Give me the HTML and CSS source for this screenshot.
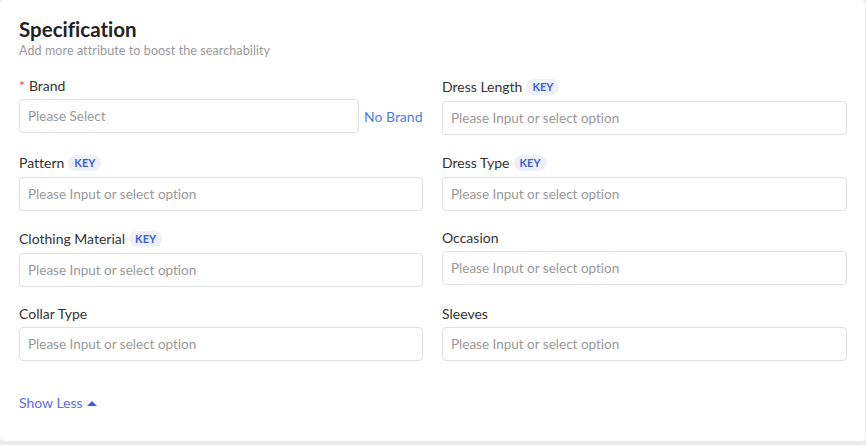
FILE: index.html
```html
<!DOCTYPE html>
<html>
<head>
<meta charset="utf-8">
<link rel="stylesheet" href="styles.css">
</head>
<body>
<div class="card">
  <div class="title">Specification</div>
  <div class="subtitle">Add more attribute to boost the searchability</div>
  <div class="grid">
    <div class="field">
      <div class="label"><span class="req">*</span> Brand</div>
      <div class="brand-row">
        <div class="input">Please Select</div>
        <a class="no-brand">No Brand</a>
      </div>
    </div>
    <div class="field">
      <div class="label">Dress Length <span class="key">KEY</span></div>
      <div class="input">Please Input or select option</div>
    </div>
    <div class="field">
      <div class="label">Pattern <span class="key">KEY</span></div>
      <div class="input">Please Input or select option</div>
    </div>
    <div class="field">
      <div class="label">Dress Type <span class="key">KEY</span></div>
      <div class="input">Please Input or select option</div>
    </div>
    <div class="field">
      <div class="label">Clothing Material <span class="key">KEY</span></div>
      <div class="input">Please Input or select option</div>
    </div>
    <div class="field">
      <div class="label">Occasion</div>
      <div class="input">Please Input or select option</div>
    </div>
    <div class="field">
      <div class="label">Collar Type</div>
      <div class="input">Please Input or select option</div>
    </div>
    <div class="field">
      <div class="label">Sleeves</div>
      <div class="input">Please Input or select option</div>
    </div>
  </div>
  <div class="show-less">Show Less <span class="caret"></span></div>
</div>
</body>
</html>
```
FILE: styles.css
```css
html, body {
  margin: 0;
  padding: 0;
  background: #ebebeb;
}
body {
  width: 866px;
  height: 445px;
  font-family: Lato, "Liberation Sans", sans-serif;
  color: #333;
  font-variant-ligatures: none;
}
.card {
  box-sizing: border-box;
  width: 865px;
  height: 441px;
  background: #fff;
  border-radius: 4px;
  padding: 15px 19px 0 19px;
}
.title {
  font-size: 20.5px;
  line-height: 28px;
  font-weight: 700;
  color: #222;
}
.subtitle {
  font-size: 12.5px;
  line-height: 15px;
  color: #999;
  letter-spacing: 0.1px;
  margin-bottom: 18px;
}
.grid {
  display: grid;
  grid-template-columns: 404px 405px;
  column-gap: 19px;
  row-gap: 17px;
  align-items: start;
}
.field {
  display: flex;
  flex-direction: column;
}
.label {
  font-size: 14px;
  line-height: 20px;
  min-height: 20px;
  margin-bottom: 3px;
  display: flex;
  align-items: center;
  gap: 4px;
  color: #333;
}
.req {
  color: #ee4d2d;
}
.key {
  display: inline-block;
  background: #eef0fa;
  color: #3b5fe0;
  font-size: 11px;
  font-weight: 700;
  line-height: 16px;
  height: 16px;
  padding: 0 6px;
  border-radius: 8px;
  margin: 3px 0;
}
.input {
  box-sizing: border-box;
  height: 34px;
  border: 1px solid #e0e0e0;
  border-radius: 4px;
  padding: 0 8px;
  font-size: 13.5px;
  line-height: 32px;
  color: #999;
}
.brand-row {
  display: flex;
  align-items: center;
  gap: 5px;
}
.brand-row .input {
  width: 340px;
}
.no-brand {
  color: #4c80e0;
  font-size: 14px;
}
.show-less {
  margin-top: 32px;
  font-size: 14px;
  line-height: 20px;
  color: #5a6ef0;
  display: flex;
  align-items: center;
  gap: 4px;
}
.caret {
  width: 0;
  height: 0;
  border-left: 5px solid transparent;
  border-right: 5px solid transparent;
  border-bottom: 5px solid #3b5fe0;
}
```
